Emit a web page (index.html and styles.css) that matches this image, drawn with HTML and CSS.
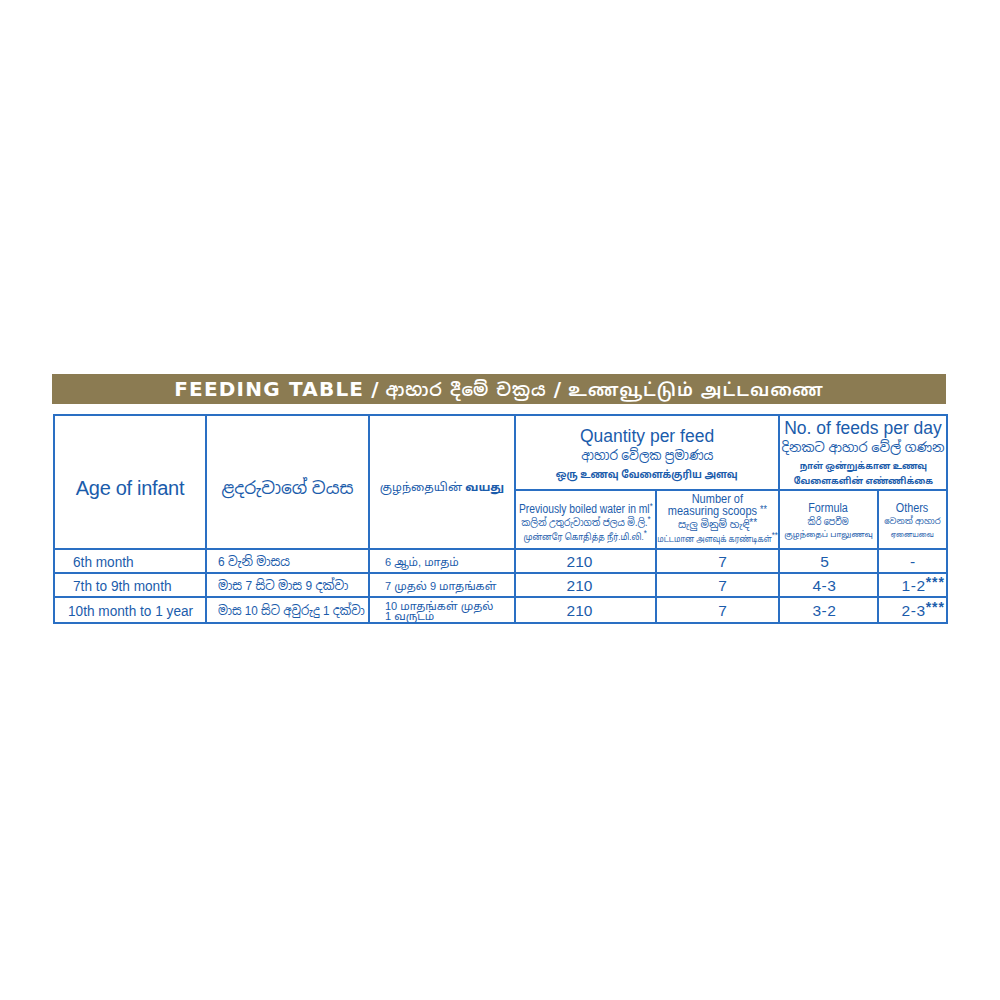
FILE: index.html
```html
<!DOCTYPE html>
<html>
<head>
<meta charset="utf-8">
<link rel="stylesheet" href="styles.css">
</head>
<body>
<div class="wrap">
  <div class="titlebar"><span class="en">FEEDING TABLE</span> / <span class="si">ආහාර දීමේ චක්‍රය</span> / <span class="ta">உணவூட்டும் அட்டவணை</span></div>
  <table class="feed">
    <colgroup>
      <col class="c1"><col class="c2"><col class="c3"><col class="c4"><col class="c5"><col class="c6"><col class="c7">
    </colgroup>
    <tr class="h1">
      <th rowspan="2" class="big"><span class="lowered">Age of infant</span></th>
      <th rowspan="2" class="sibig"><span class="lowered">ළදරුවාගේ වයස</span></th>
      <th rowspan="2" class="tabig"><span class="lowered">குழந்தையின் <b>வயது</b></span></th>
      <th colspan="2" class="grp g1">
        <div class="ln en17">Quantity per feed</div>
        <div class="ln si16"><span class="sx s90">ආහාර වේලක ප්‍රමාණය</span></div>
        <div class="ln ta12"><span class="sx s95">ஒரு உணவு வேளைக்குரிய அளவு</span></div>
      </th>
      <th colspan="2" class="grp g2">
        <div class="ln en17">No. of feeds per day</div>
        <div class="ln si16 sm">දිනකට ආහාර වේල් ගණන</div>
        <div class="ln ta12 sm"><span class="sx s90">நாள் ஒன்றுக்கான உணவு<br>வேளைகளின் எண்ணிக்கை</span></div>
      </th>
    </tr>
    <tr class="h2">
      <th class="sub s1">
        <div class="ln en12"><span class="sx s86">Previously boiled water in ml<sup class="st">*</sup></span></div>
        <div class="ln si11"><span class="sx s90">කලින් උතුරුවාගත් ජලය මි.ලි.<sup class="st">*</sup></span></div>
        <div class="ln ta10"><span class="sx s88">முன்னரே கொதித்த நீர்.மி.லி.<sup class="st">*</sup></span></div>
      </th>
      <th class="sub s2">
        <div class="ln en12 tight"><span class="sx s88">Number of<br>measuring scoops <span class="st2">**</span></span></div>
        <div class="ln si11">සැලු මිනුම් හැඳි <span class="st2">**</span></div>
        <div class="ln ta10 t2"><span class="sx s88">மட்டமான அளவுக் கரண்டிகள்<sup class="st">**</sup></span></div>
      </th>
      <th class="sub s3">
        <div class="ln en11"><span class="sx s90">Formula</span></div>
        <div class="ln si10"><span class="sx s85">කිරි පෙවීම</span></div>
        <div class="ln ta9">குழந்தைப் பாலுணவு</div>
      </th>
      <th class="sub s3">
        <div class="ln en11"><span class="sx s90">Others</span></div>
        <div class="ln si10 x">වෙනත් ආහාර</div>
        <div class="ln ta9 x"><span class="sx s85">ஏனையவை</span></div>
      </th>
    </tr>
    <tr class="r">
      <td class="en"><span class="sx sl s88">6th month</span></td>
      <td class="si"><span class="sx sl s92">6 වැනි මාසය</span></td>
      <td class="ta">6 ஆம், மாதம்</td>
      <td class="n a">210</td><td class="n b">7</td><td class="n c"><span class="sx">5</span></td><td class="n">-</td>
    </tr>
    <tr class="r">
      <td class="en"><span class="sx sl s88">7th to 9th month</span></td>
      <td class="si"><span class="sx sl s92">මාස 7 සිට මාස 9 දක්වා</span></td>
      <td class="ta">7 முதல் 9 மாதங்கள்</td>
      <td class="n a">210</td><td class="n b">7</td><td class="n c"><span class="dash">4-3</span></td><td class="n o"><span class="dash">1-2</span><sup class="st3">***</sup></td>
    </tr>
    <tr class="r last">
      <td class="en e3"><span class="sx sl s88">10th month to 1 year</span></td>
      <td class="si"><span class="sx sl s90">මාස 10 සිට අවුරුදු 1 දක්වා</span></td>
      <td class="ta two">10 மாதங்கள் முதல்<br>1 வருடம்</td>
      <td class="n a">210</td><td class="n b">7</td><td class="n c"><span class="dash">3-2</span></td><td class="n o"><span class="dash">2-3</span><sup class="st3">***</sup></td>
    </tr>
  </table>
</div>
</body>
</html>
```

FILE: styles.css
```css
html, body {
  margin: 0;
  padding: 0;
  background: #ffffff;
}
body {
  font-family: "Liberation Sans", "Noto Sans Sinhala", "Noto Sans Tamil", "Noto Sans", sans-serif;
  color: #1b5cab;
}
.wrap {
  width: 894px;
  margin: 374px 0 0 52px;
}
.titlebar {
  height: 30px;
  background: #8b7b52;
  color: #ffffff;
  font-family: "DejaVu Sans", "Noto Sans Sinhala", "Noto Sans Tamil", sans-serif;
  font-weight: bold;
  font-size: 20px;
  line-height: 30px;
  text-align: center;
  white-space: nowrap;
}
.titlebar .en {
  letter-spacing: 1.2px;
}
.titlebar .si, .titlebar .ta {
  font-weight: 600;
  font-size: 17.5px;
  letter-spacing: 1px;
}
.feed {
  margin: 10px 0 0 1px;
  width: 893px;
  table-layout: fixed;
  border-collapse: collapse;
}
.feed th, .feed td {
  border: 2px solid #2a6fc3;
  padding: 0;
  font-weight: normal;
  text-align: center;
  vertical-align: middle;
  overflow: hidden;
  white-space: nowrap;
}
col.c1 { width: 152px; }
col.c2 { width: 163px; }
col.c3 { width: 146px; }
col.c4 { width: 141px; }
col.c5 { width: 123px; }
col.c6 { width: 99px; }
col.c7 { width: 69px; }
.h1 { height: 75px; }
.h2 { height: 59px; }
.r { height: 24px; }
.r.last { height: 26px; }

.ln {
  display: flex;
  justify-content: center;
}
.sx {
  display: inline-block;
  transform-origin: center;
}
.sx.sl { transform-origin: left center; }
.s85 { transform: scaleX(0.85); }
.s86 { transform: scaleX(0.86); }
.s88 { transform: scaleX(0.88); }
.s90 { transform: scaleX(0.90); }
.s92 { transform: scaleX(0.92); }
.s95 { transform: scaleX(0.95); }

.lowered {
  display: inline-block;
  padding-top: 12px;
}
.big { font-size: 20px; letter-spacing: -0.3px; }
.sibig { font-size: 17px; }
.tabig { font-size: 11.5px; }
.tabig b { font-weight: bold; }
.grp { vertical-align: top !important; }
.g1 { padding-top: 10px !important; }
.g2 { padding-top: 2px !important; }
.en17 { font-size: 17.5px; line-height: 20px; }
.si16 { font-size: 13.5px; line-height: 20px; }
.si16.sm { font-size: 13px; line-height: 20px; }
.ta12 { font-size: 10px; line-height: 18px; font-weight: bold; }
.ta12.sm { font-size: 9.5px; line-height: 15px; }
.sub { vertical-align: top !important; }
.s1 { padding-top: 11px !important; }
.s2 { padding-top: 2px !important; }
.s3 { padding-top: 11px !important; }
.en12 { font-size: 12px; line-height: 14px; }
.en12.tight { font-size: 12.5px; line-height: 12px; }
.en11 { font-size: 12px; line-height: 13px; }
.si11 { font-size: 10px; line-height: 14px; }
.si10 { font-size: 9.5px; line-height: 13px; }
.si10.x { font-size: 8.5px; }
.ta10 { font-size: 9px; line-height: 14px; }
.ta10.t2 { font-size: 8.5px; }
.ta9 { font-size: 8px; line-height: 13px; }
.ta9.x { font-size: 8px; }
.st {
  font-size: 9px;
  vertical-align: 4px;
  line-height: 0;
}
.st2 {
  font-size: 10px;
  position: relative;
  top: -2px;
}
.st3 {
  font-size: 14px;
  font-weight: bold;
  letter-spacing: 1px;
  vertical-align: 4px;
  line-height: 0;
}
.dash { letter-spacing: 0.6px; }
.r td { font-size: 15.5px; line-height: 18px; padding-top: 2px; }
.r td.en { text-align: left; padding-left: 18px; }
.r td.en.e3 { padding-left: 13px; }
.r td.si { text-align: left; padding-left: 11px; font-size: 13px; }
.r td.ta { text-align: left; padding-left: 15px; font-size: 11px; }
.r td.ta.two { line-height: 10px; }
.r td.n { text-align: center; }
.r td.a { padding-right: 12px; }
.r td.b { padding-left: 10px; }
.r td.c { padding-right: 8px; }
.r td.o { text-align: right; padding-right: 1px; }
```
